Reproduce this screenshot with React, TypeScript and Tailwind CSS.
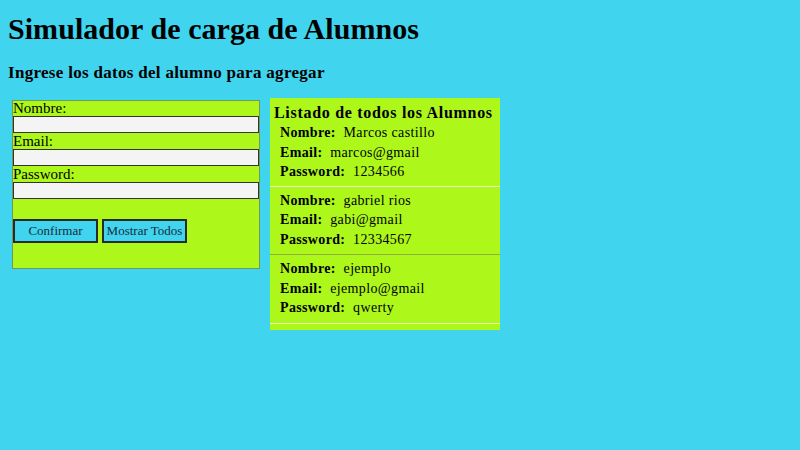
const alumnos = [
    { nombre: 'Marcos castillo', email: 'marcos@gmail', password: '1234566' },
    { nombre: 'gabriel rios', email: 'gabi@gmail', password: '12334567' },
    { nombre: 'ejemplo', email: 'ejemplo@gmail', password: 'qwerty' },
];

export default function App() {
    return (
        <div className="min-h-[450px] bg-[#40d4ee] px-2 pt-[13px] text-black font-['Liberation_Serif',serif]">
            <h1 className="text-[30px] font-bold leading-[32px] tracking-[0.05px]">Simulador de carga de Alumnos</h1>
            <h3 className="mt-[18px] text-[17px] font-bold leading-[20px] tracking-[0.3px]">Ingrese los datos del alumno para agregar</h3>

            <div className="mt-[17px] flex items-start gap-[10px] pl-1">
                {/* Form */}
                <div className="w-[248px] h-[169px] border border-[#6f9a5a] bg-[#adf71a] flex flex-col">
                    <label className="text-[15px] leading-[15px]">Nombre:</label>
                    <input className="h-[17px] border border-[#333] bg-[#f4f4f4]" />
                    <label className="text-[15px] leading-[16px]">Email:</label>
                    <input className="h-[17px] border border-[#333] bg-[#f4f4f4]" />
                    <label className="text-[15px] leading-[16px]">Password:</label>
                    <input className="h-[17px] border border-[#333] bg-[#f4f4f4]" />
                    <div className="mt-[20px] flex gap-[4px]">
                        <button className="w-[85px] h-[24px] border-2 border-[#2a2a2a] bg-[#40d4ee] text-[13px] text-[#1a2a3a]">Confirmar</button>
                        <button className="w-[85px] h-[24px] border-2 border-[#2a2a2a] bg-[#40d4ee] text-[13px] text-[#1a2a3a]">Mostrar Todos</button>
                    </div>
                </div>

                {/* Listado */}
                <div className="-mt-[2px] w-[230px] bg-[#adf71a] pb-[6px]">
                    <h4 className="px-[4px] pt-[6px] text-[16px] font-bold leading-[18px] tracking-[0.7px]">Listado de todos los Alumnos</h4>
                    {alumnos.map((a, i) => (
                        <div key={a.nombre}>
                            <div className={`px-[10px] text-[14px] leading-[19.5px] tracking-[0.35px] ${i === 0 ? 'pt-[1px] pb-[4px]' : 'pt-[4px] pb-[5px]'}`}>
                                <div><b>Nombre:</b>&nbsp;&nbsp;{a.nombre}</div>
                                <div><b>Email:</b>&nbsp;&nbsp;{a.email}</div>
                                <div><b>Password:</b>&nbsp;&nbsp;{a.password}</div>
                            </div>
                            <div className={`h-px ${i === 1 ? 'bg-[#8fb040]' : 'bg-[#e4f9b8]'}`} />
                        </div>
                    ))}
                </div>
            </div>
        </div>
    );
}
